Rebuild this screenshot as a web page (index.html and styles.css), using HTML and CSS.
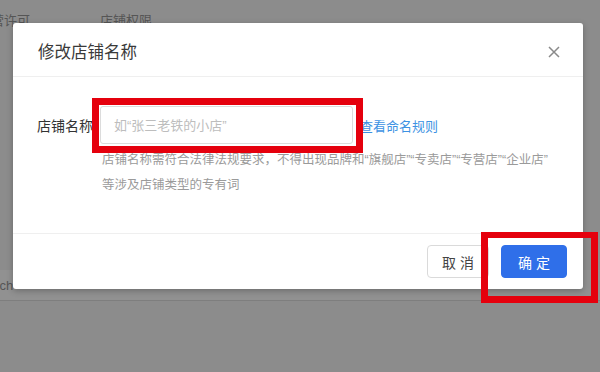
FILE: index.html
```html
<!DOCTYPE html>
<html lang="zh-CN">
<head>
<meta charset="utf-8">
<title>修改店铺名称</title>
<link rel="stylesheet" href="styles.css">
</head>
<body>
<div class="page">
  <div class="tabs">
    <span class="tab tab-a">经营许可</span>
    <span class="tab tab-b">店铺权限</span>
  </div>
  <div class="row"><span class="row-text">Search</span></div>
</div>

<div class="modal">
  <div class="modal-header">
    <span class="title">修改店铺名称</span>
    <span class="close">
      <svg width="12" height="12" viewBox="0 0 12 12"><path d="M1 1L11 11M11 1L1 11" stroke="#8a8a8a" stroke-width="1.5" fill="none"/></svg>
    </span>
  </div>
  <div class="modal-body">
    <div class="field">
      <span class="label">店铺名称</span>
      <input class="input" type="text" placeholder="如“张三老铁的小店”">
      <a class="link">查看命名规则</a>
    </div>
    <div class="help">店铺名称需符合法律法规要求，不得出现品牌和“旗舰店”“专卖店”“专营店”“企业店”<br>等涉及店铺类型的专有词</div>
  </div>
  <div class="modal-footer">
    <button class="btn btn-cancel">取 消</button>
    <button class="btn btn-ok">确 定</button>
  </div>
</div>

<div class="mark mark-input"></div>
<div class="mark mark-ok"></div>
</body>
</html>
```
FILE: styles.css
```css
html, body {
  margin: 0;
  padding: 0;
}
body {
  width: 600px;
  height: 372px;
  overflow: hidden;
  position: relative;
  background: #8c8c8c;
  font-family: "Liberation Sans", "Noto Sans CJK SC", sans-serif;
}
.page {
  color: #555;
  font-size: 13px;
}
.tabs {
  display: flex;
  padding-top: 13px;
  line-height: 16px;
  height: 17px;
}
.tab-a {
  margin-left: -22px;
}
.tab-b {
  margin-left: 70px;
}
.row {
  margin-top: 240px;
  height: 30px;
  display: flex;
  align-items: center;
  border-bottom: 1px solid #7e7e7e;
  background: #919191;
}
.row-text {
  margin-left: -28px;
}

.modal {
  position: absolute;
  left: 13px;
  top: 23px;
  width: 570px;
  background: #fff;
  border-radius: 3px;
  box-shadow: 0 2px 6px rgba(0, 0, 0, 0.25);
}
.modal-header {
  display: flex;
  justify-content: space-between;
  align-items: center;
  padding: 18px 23px 13px 25px;
  border-bottom: 1px solid #efefef;
}
.title {
  font-size: 16.5px;
  line-height: 22px;
  color: #3a3a3a;
}
.close {
  display: flex;
  width: 12px;
  height: 12px;
}
.modal-body {
  padding: 29px 24px 35px;
}
.field {
  display: flex;
  align-items: center;
  height: 38px;
}
.label {
  width: 63px;
  flex: none;
  font-size: 14px;
  color: #333;
}
.input {
  width: 253px;
  height: 38px;
  box-sizing: border-box;
  border: 1px solid #dcdcdc;
  border-radius: 3px;
  padding: 0 13px;
  font-size: 13px;
  font-family: inherit;
  outline: none;
  margin: 0;
}
.input::placeholder {
  color: #bdbdbd;
}
.link {
  margin-left: 7px;
  color: #3d92e3;
  font-size: 13px;
}
.help {
  margin: 4px 0 0 65px;
  font-size: 12.5px;
  line-height: 25px;
  color: #9a9a9a;
  white-space: nowrap;
}
.modal-footer {
  display: flex;
  justify-content: flex-end;
  gap: 12px;
  padding: 11px 16px;
  border-top: 1px solid #efefef;
}
.btn {
  height: 33px;
  border-radius: 4px;
  font-size: 14px;
  font-family: inherit;
  padding: 0;
  margin: 0;
  cursor: pointer;
}
.btn-cancel {
  width: 62px;
  background: #fff;
  border: 1px solid #dadada;
  color: #444;
}
.btn-ok {
  width: 66px;
  background: #2f6fe9;
  border: 1px solid #2f6fe9;
  color: #fff;
}
.mark {
  position: absolute;
  box-sizing: border-box;
  border: 7px solid #e5000d;
}
.mark-input {
  left: 92px;
  top: 98px;
  width: 271px;
  height: 55px;
}
.mark-ok {
  left: 481px;
  top: 232px;
  width: 117px;
  height: 71px;
  border-top-width: 6px;
}
```
